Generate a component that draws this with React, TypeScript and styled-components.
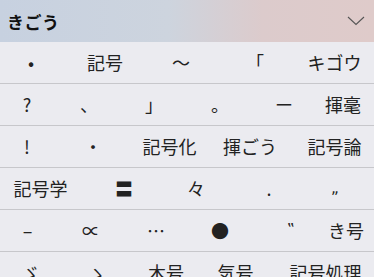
import React from "react";
import styled, { createGlobalStyle } from "styled-components";

const Global = createGlobalStyle`
  html, body { margin: 0; padding: 0; background: #ebebf0; }
  body { font-family: "Noto Sans CJK JP", "Noto Sans", sans-serif; }
`;

const Panel = styled.div`
  width: 374px;
  height: 277px;
  overflow: hidden;
  background: #ebebf0;
  display: flex;
  flex-direction: column;
`;

const Header = styled.div`
  height: 42px;
  flex: none;
  display: flex;
  align-items: center;
  justify-content: space-between;
  padding: 0 9px 0 7px;
  background: linear-gradient(90deg, #c7d1e0 0%, #cdd4de 45%, #dccbcc 70%, #dfcbca 100%);
`;

const Title = styled.div`
  font-size: 17px;
  font-weight: 700;
  color: #111;
  letter-spacing: 0.5px;
`;

const Row = styled.div<{ $cols: string }>`
  height: 41px;
  flex: none;
  display: grid;
  grid-template-columns: ${(p) => p.$cols};
  align-items: center;
  border-bottom: 1px solid #c7c7cb;
  overflow: hidden;
`;

const Cell = styled.div<{ $alt?: boolean }>`
  text-align: center;
  font-size: ${(p) => (p.$alt ? "15px" : "18px")};
  color: #222;
  white-space: nowrap;
  line-height: 41px;
  font-family: ${(p) => (p.$alt ? '"DejaVu Sans", sans-serif' : "inherit")};
`;

const alt = new Set(["„", "‟"]);

const rows: { cols: number[]; items: string[] }[] = [
  { cols: [62, 86, 66, 82, 77], items: ["•", "記号", "〜", "「", "キゴウ"] },
  { cols: [54, 70, 60, 72, 56, 62], items: ["?", "、", "」", "。", "ー", "揮毫"] },
  { cols: [54, 78, 75, 86, 83], items: ["!", "・", "記号化", "揮ごう", "記号論"] },
  { cols: [81, 86, 58, 88, 44], items: ["記号学", "〓", "々", ".", "„"] },
  { cols: [55, 72, 58, 70, 72, 38], items: ["–", "∝", "…", "●", "‟", "き号"] },
  { cols: [62, 70, 68, 71, 109], items: ["ゞ", "ゝ", "木号", "気号", "記号処理"] },
];

export default function App() {
  return (
    <>
      <Global />
      <Panel>
        <Header>
          <Title>きごう</Title>
          <svg width="18" height="10" viewBox="0 0 18 10">
            <polyline points="1,1 9,8.5 17,1" fill="none" stroke="#555" strokeWidth="1.1" />
          </svg>
        </Header>
        {rows.map((r, i) => (
          <Row key={i} $cols={r.cols.map((c) => `${c}px`).join(" ")}>
            {r.items.map((t, j) => (
              <Cell key={j} $alt={alt.has(t)}>
                {t}
              </Cell>
            ))}
          </Row>
        ))}
      </Panel>
    </>
  );
}
